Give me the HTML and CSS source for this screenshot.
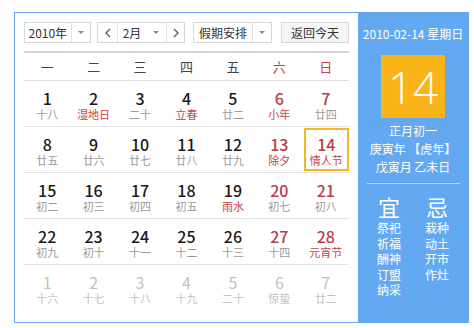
FILE: index.html
```html
<!DOCTYPE html>
<html lang="zh-CN">
<head>
  <meta charset="UTF-8">
  <title>万年历</title>
  <link rel="stylesheet" href="styles.css">
</head>
<body>
  <div class="cal">
    <div class="main">
      <div class="toolbar">
        <div class="sel sel-year"><span class="sel-text">2010年</span><span class="sel-arrow"><i class="tri"></i></span></div>
        <div class="sel sel-month">
          <span class="nav"><svg width="6" height="10" viewBox="0 0 6 10"><polyline points="5,1 1,5 5,9" fill="none" stroke="#555" stroke-width="1.2"/></svg></span>
          <span class="sel-text">2月</span><span class="sel-arrow plain"><i class="tri"></i></span>
          <span class="nav"><svg width="6" height="10" viewBox="0 0 6 10"><polyline points="1,1 5,5 1,9" fill="none" stroke="#555" stroke-width="1.2"/></svg></span>
        </div>
        <div class="sel sel-holiday"><span class="sel-text">假期安排</span><span class="sel-arrow"><i class="tri"></i></span></div>
        <div class="btn-today">返回今天</div>
      </div>

      <div class="week">
        <span>一</span><span>二</span><span>三</span><span>四</span><span>五</span><span class="red">六</span><span class="red">日</span>
      </div>

      <div class="days">
        <div class="day"><b>1</b><em>十八</em></div>
        <div class="day"><b>2</b><em class="fest">湿地日</em></div>
        <div class="day"><b>3</b><em>二十</em></div>
        <div class="day"><b>4</b><em class="fest">立春</em></div>
        <div class="day"><b>5</b><em>廿二</em></div>
        <div class="day wkend"><b>6</b><em class="fest">小年</em></div>
        <div class="day wkend"><b>7</b><em>廿四</em></div>

        <div class="day"><b>8</b><em>廿五</em></div>
        <div class="day"><b>9</b><em>廿六</em></div>
        <div class="day"><b>10</b><em>廿七</em></div>
        <div class="day"><b>11</b><em>廿八</em></div>
        <div class="day"><b>12</b><em>廿九</em></div>
        <div class="day wkend"><b>13</b><em class="fest">除夕</em></div>
        <div class="day wkend today"><div class="today-box"><b>14</b><em class="fest">情人节</em></div></div>

        <div class="day"><b>15</b><em>初二</em></div>
        <div class="day"><b>16</b><em>初三</em></div>
        <div class="day"><b>17</b><em>初四</em></div>
        <div class="day"><b>18</b><em>初五</em></div>
        <div class="day"><b>19</b><em class="fest">雨水</em></div>
        <div class="day wkend"><b>20</b><em>初七</em></div>
        <div class="day wkend"><b>21</b><em>初八</em></div>

        <div class="day"><b>22</b><em>初九</em></div>
        <div class="day"><b>23</b><em>初十</em></div>
        <div class="day"><b>24</b><em>十一</em></div>
        <div class="day"><b>25</b><em>十二</em></div>
        <div class="day"><b>26</b><em>十三</em></div>
        <div class="day wkend"><b>27</b><em>十四</em></div>
        <div class="day wkend"><b>28</b><em class="fest">元宵节</em></div>

        <div class="day other"><b>1</b><em>十六</em></div>
        <div class="day other"><b>2</b><em>十七</em></div>
        <div class="day other"><b>3</b><em>十八</em></div>
        <div class="day other"><b>4</b><em>十九</em></div>
        <div class="day other"><b>5</b><em>二十</em></div>
        <div class="day other"><b>6</b><em>惊蛰</em></div>
        <div class="day other"><b>7</b><em>廿二</em></div>
      </div>
    </div>

    <div class="side">
      <div class="side-date">2010-02-14 星期日</div>
      <div class="big-day">14</div>
      <div class="lunar">
        <div>正月初一</div>
        <div>庚寅年 【虎年】</div>
        <div>戊寅月 乙未日</div>
      </div>
      <div class="side-line"></div>
      <div class="yiji">
        <div class="yj-col">
          <div class="yj-title">宜</div>
          <div>祭祀</div><div>祈福</div><div>酬神</div><div>订盟</div><div>纳采</div>
        </div>
        <div class="yj-col">
          <div class="yj-title">忌</div>
          <div>栽种</div><div>动土</div><div>开市</div><div>作灶</div>
        </div>
      </div>
    </div>
  </div>
</body>
</html>
```

FILE: styles.css
```css
body {
  margin: 0;
  background: #fff;
  font-family: "Noto Sans CJK SC", "Noto Sans", sans-serif;
}

.cal {
  display: flex;
  margin: 12px 0 0 14px;
  width: 455px;
  height: 311px;
  border: 1px solid #6aa6e6;
  box-sizing: border-box;
}

.main {
  width: 343px;
  padding: 9px 9px 0 9px;
  box-sizing: border-box;
}

/* 上部の選択ボタン */
.toolbar {
  display: flex;
  height: 21px;
}

.sel {
  display: flex;
  height: 21px;
  border: 1px solid #d8d8d8;
  box-sizing: border-box;
  background: #fff;
  font-size: 12px;
  color: #333;
}

.sel-text {
  display: flex;
  align-items: center;
  justify-content: center;
}

.sel-arrow {
  display: flex;
  align-items: center;
  justify-content: center;
  border-left: 1px solid #e2e2e2;
}

.sel-arrow.plain {
  border-left: none;
}

.tri {
  width: 0;
  height: 0;
  border-left: 3px solid transparent;
  border-right: 3px solid transparent;
  border-top: 3px solid #888;
}

.sel-year { width: 67px; }
.sel-year .sel-text { width: 47px; }
.sel-year .sel-arrow { width: 19px; }

.sel-month {
  width: 88px;
  margin-left: 6px;
}
.sel-month .nav {
  display: flex;
  align-items: center;
  justify-content: center;
  width: 19px;
}
.sel-month .nav:first-child { border-right: 1px solid #e2e2e2; }
.sel-month .nav:last-child { border-left: 1px solid #e2e2e2; width: 17px; }
.sel-month .sel-text { width: 28px; }
.sel-month .sel-arrow { width: 20px; }

.sel-holiday {
  width: 79px;
  margin-left: 8px;
}
.sel-holiday .sel-text { width: 59px; }
.sel-holiday .sel-arrow { width: 18px; }

.btn-today {
  width: 68px;
  height: 21px;
  margin-left: 9px;
  border: 1px solid #d8d8d8;
  box-sizing: border-box;
  background: #f6f6f6;
  font-size: 12px;
  color: #333;
  display: flex;
  align-items: center;
  justify-content: center;
}

/* 曜日 */
.week {
  display: grid;
  grid-template-columns: repeat(7, 1fr);
  margin-top: 8px;
  height: 30px;
  border-top: 2px solid #d4d4d4;
  border-bottom: 1px solid #e0e0e0;
  box-sizing: border-box;
  font-size: 13px;
  color: #444;
}

.week span {
  display: flex;
  align-items: center;
  justify-content: center;
}

.week .red { color: #c9414a; }

.days {
  display: grid;
  grid-template-columns: repeat(7, 1fr);
  grid-auto-rows: 46px;
}

.day {
  display: flex;
  flex-direction: column;
  align-items: center;
  padding-top: 8px;
  border-bottom: 1px solid #e2e2e2;
  box-sizing: border-box;
}

.day:nth-last-child(-n+7) {
  border-bottom: none;
}

.day b {
  font-size: 16px;
  font-weight: 500;
  line-height: 19px;
  color: #1a1a1a;
}

.day em {
  font-style: normal;
  font-size: 11px;
  line-height: 13px;
  color: #9a9a9a;
}

.day em.fest { color: #c9414a; }
.day.wkend b { color: #c03a44; }

.day.other b,
.day.other em { color: #c2c2c2; font-weight: normal; }

.day.today {
  padding: 1px 0 1px 1px;
}

.today-box {
  width: 100%;
  height: 100%;
  display: flex;
  flex-direction: column;
  align-items: center;
  padding-top: 5px;
  border: 2px solid #f3b62a;
  box-sizing: border-box;
}

/* 右側の青いパネル */
.side {
  flex: 1;
  background: #63a9f1;
  color: #fff;
  display: flex;
  flex-direction: column;
  align-items: center;
  padding-top: 13px;
}

.side-date {
  font-size: 12px;
  line-height: 16px;
}

.big-day {
  width: 64px;
  height: 63px;
  margin-top: 13px;
  background: #fab319;
  font-family: "Open Sans", "Noto Sans", sans-serif;
  font-weight: 300;
  font-size: 44px;
  display: flex;
  align-items: center;
  justify-content: center;
}

.lunar {
  margin-top: 4px;
  font-size: 12px;
  line-height: 18px;
  text-align: center;
}

.side-line {
  width: 93px;
  height: 1px;
  margin-top: 7px;
  background: rgba(255, 255, 255, 0.55);
}

.yiji {
  display: flex;
  margin-top: 8px;
  font-size: 12px;
  line-height: 15.5px;
}

.yj-col {
  width: 48px;
  text-align: center;
}

.yj-title {
  font-size: 22px;
  line-height: 28px;
  margin-bottom: 0;
}
```
